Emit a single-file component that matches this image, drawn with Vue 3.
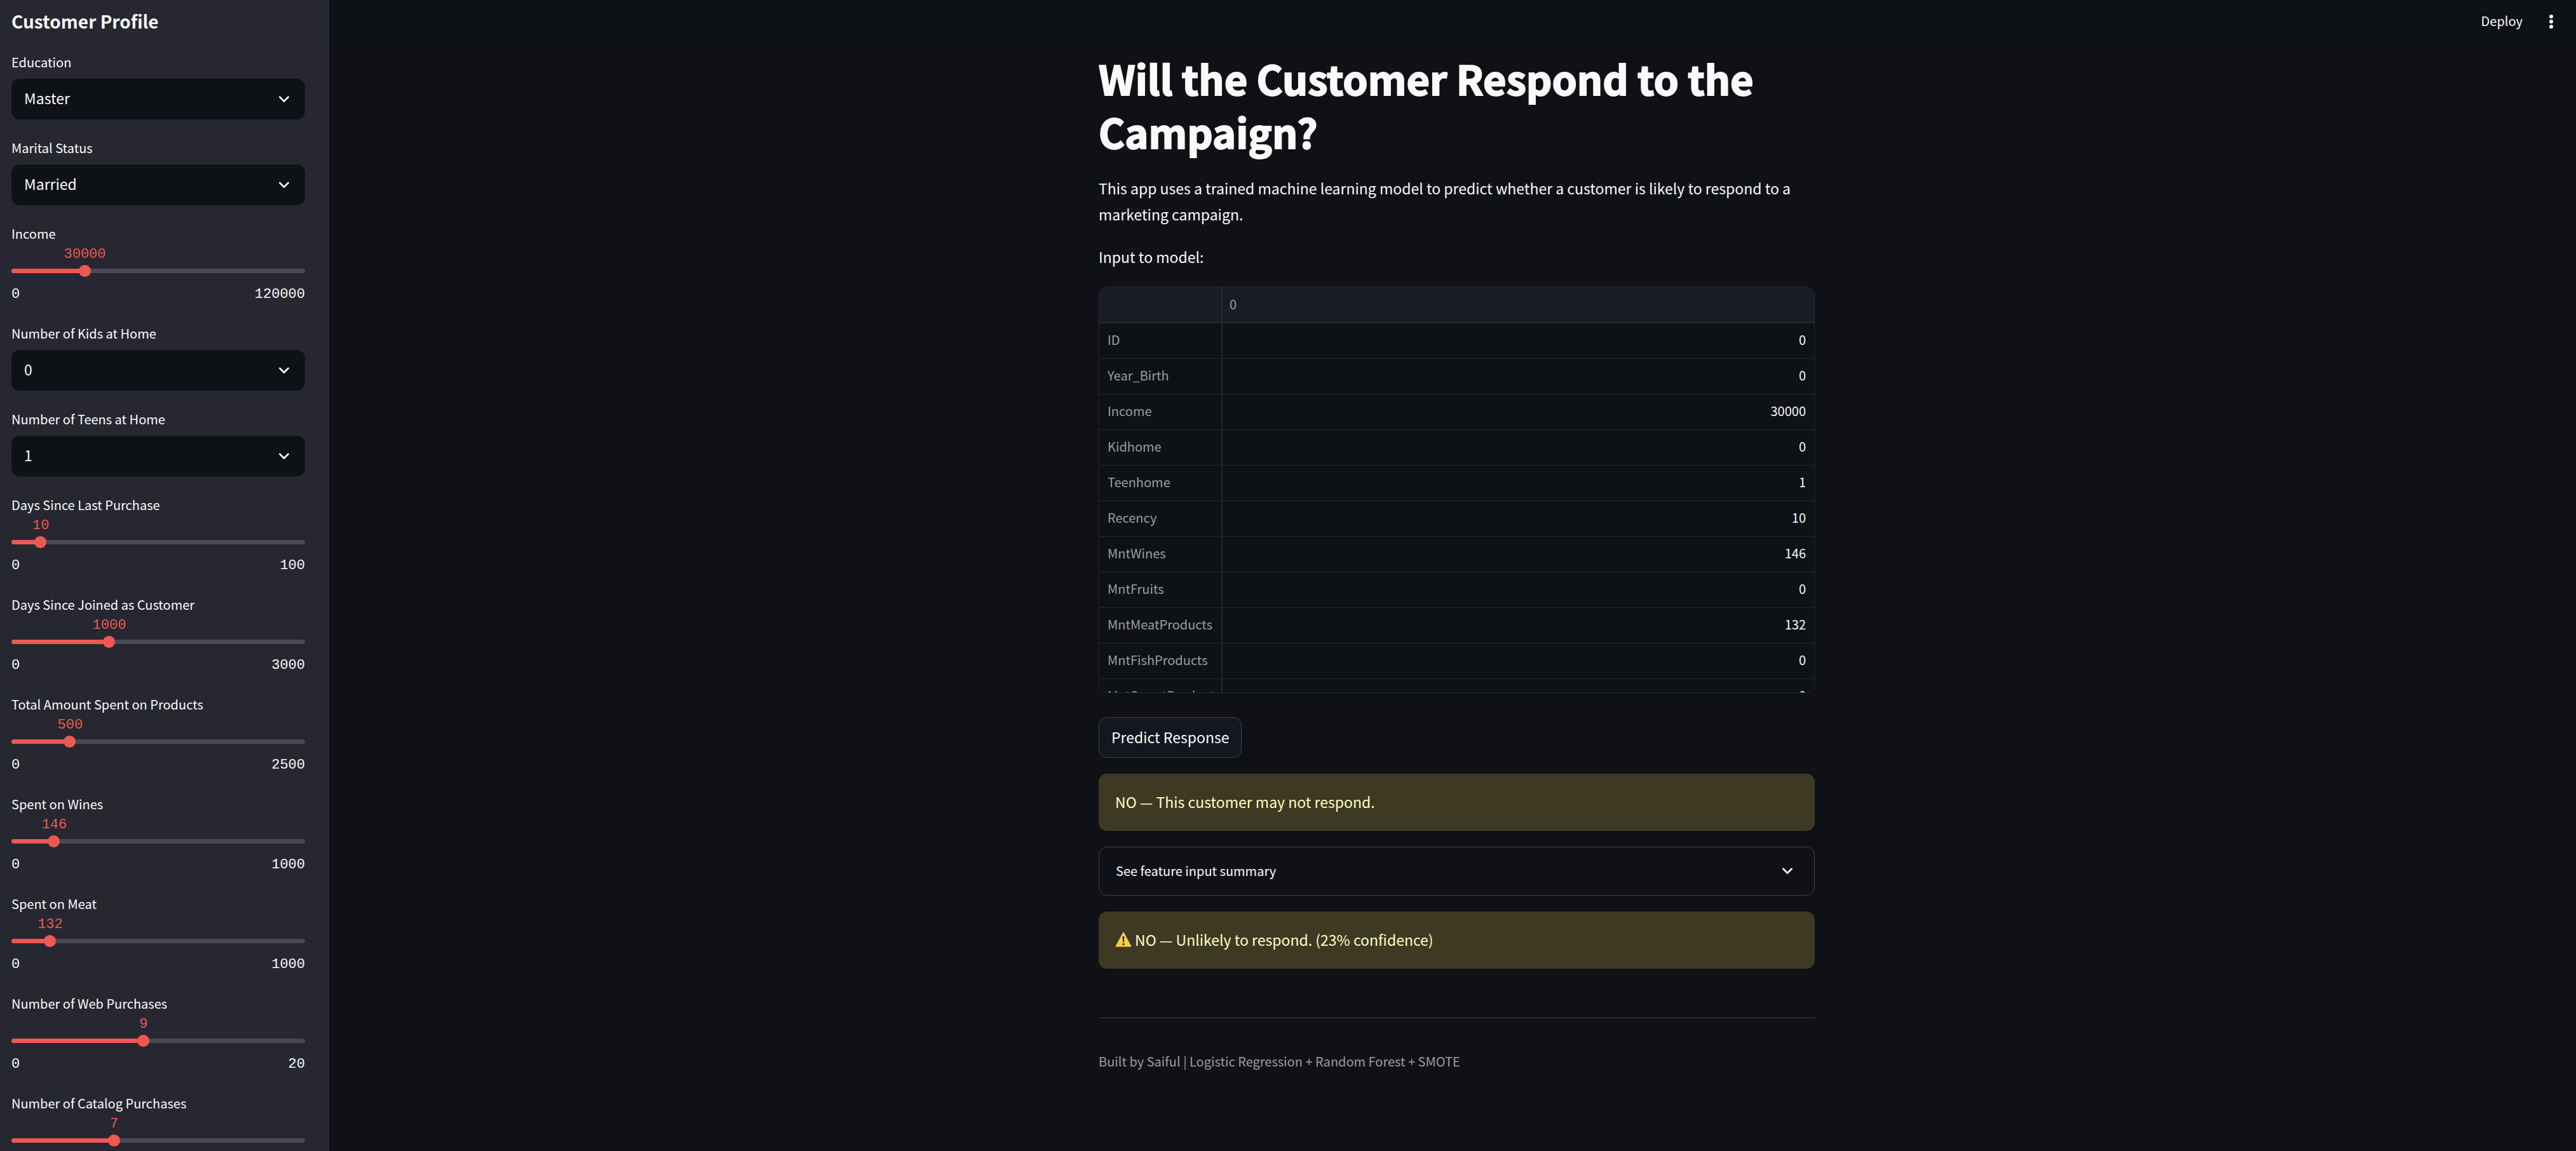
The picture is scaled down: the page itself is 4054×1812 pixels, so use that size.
<script setup>
import { reactive } from 'vue'

const fields = reactive([
  { id: 'education', kind: 'select', label: 'Education', value: 'Master', options: ['Basic', 'Graduation', 'Master', 'PhD'] },
  { id: 'marital', kind: 'select', label: 'Marital Status', value: 'Married', options: ['Single', 'Married', 'Divorced', 'Widow'] },
  { id: 'income', kind: 'range', label: 'Income', value: 30000, max: 120000 },
  { id: 'kids', kind: 'select', label: 'Number of Kids at Home', value: '0', options: ['0', '1', '2'] },
  { id: 'teens', kind: 'select', label: 'Number of Teens at Home', value: '1', options: ['0', '1', '2'] },
  { id: 'recency', kind: 'range', label: 'Days Since Last Purchase', value: 10, max: 100 },
  { id: 'joined', kind: 'range', label: 'Days Since Joined as Customer', value: 1000, max: 3000 },
  { id: 'total', kind: 'range', label: 'Total Amount Spent on Products', value: 500, max: 2500 },
  { id: 'wines', kind: 'range', label: 'Spent on Wines', value: 146, max: 1000 },
  { id: 'meat', kind: 'range', label: 'Spent on Meat', value: 132, max: 1000 },
  { id: 'web', kind: 'range', label: 'Number of Web Purchases', value: 9, max: 20 },
  { id: 'catalog', kind: 'range', label: 'Number of Catalog Purchases', value: 7, max: 20 }
])

const rows = [
  ['ID', 0],
  ['Year_Birth', 0],
  ['Income', 30000],
  ['Kidhome', 0],
  ['Teenhome', 1],
  ['Recency', 10],
  ['MntWines', 146],
  ['MntFruits', 0],
  ['MntMeatProducts', 132],
  ['MntFishProducts', 0],
  ['MntSweetProducts', 0]
]

const percent = (field) => `${(field.value / field.max) * 100}%`
</script>

<template>
  <div class="app">
    <aside class="sidebar">
      <h2>Customer Profile</h2>
      <template v-for="field in fields" :key="field.id">
        <div v-if="field.kind === 'select'" class="field">
          <label :for="field.id">{{ field.label }}</label>
          <div class="select">
            <select :id="field.id" v-model="field.value">
              <option v-for="option in field.options" :key="option">{{ option }}</option>
            </select>
            <svg class="chevron" viewBox="0 0 24 24" aria-hidden="true">
              <path d="M7 9.6 12 14.6 17 9.6" />
            </svg>
          </div>
        </div>
        <div v-else class="field">
          <label :for="field.id">{{ field.label }}</label>
          <div class="value">
            <output :for="field.id" :style="{ marginLeft: percent(field) }">{{ field.value }}</output>
          </div>
          <div class="slider">
            <div class="track"><div class="fill" :style="{ width: percent(field) }"></div></div>
            <input :id="field.id" v-model.number="field.value" type="range" min="0" :max="field.max" />
          </div>
          <div class="bounds"><span>0</span><span>{{ field.max }}</span></div>
        </div>
      </template>
    </aside>

    <div class="page">
      <header class="toolbar">
        <button type="button" class="deploy">Deploy</button>
        <button type="button" class="menu" aria-label="Main menu">
          <svg viewBox="0 0 32 32" aria-hidden="true">
            <circle cx="16" cy="8" r="3" />
            <circle cx="16" cy="16" r="3" />
            <circle cx="16" cy="24" r="3" />
          </svg>
        </button>
      </header>

      <main>
        <h1>Will the Customer Respond to the Campaign?</h1>
        <p>
          This app uses a trained machine learning model to predict whether a customer is likely to respond to a
          marketing campaign.
        </p>
        <p>Input to model:</p>

        <div class="grid">
          <table>
            <thead>
              <tr>
                <th class="index"></th>
                <th scope="col">0</th>
              </tr>
            </thead>
            <tbody>
              <tr v-for="[name, value] in rows" :key="name">
                <th class="index" scope="row">{{ name }}</th>
                <td>{{ value }}</td>
              </tr>
            </tbody>
          </table>
        </div>

        <button type="button" class="predict">Predict Response</button>

        <div class="alert" role="alert">NO — This customer may not respond.</div>

        <details>
          <summary>
            See feature input summary
            <svg class="chevron" viewBox="0 0 24 24" aria-hidden="true">
              <path d="M7 9.6 12 14.6 17 9.6" />
            </svg>
          </summary>
        </details>

        <div class="alert" role="alert">
          <svg class="warning" viewBox="0 0 26 24" role="img" aria-label="Warning">
            <defs>
              <linearGradient id="warning-fill" x1="0" y1="0" x2="0" y2="1">
                <stop offset="0" stop-color="#f8d877" />
                <stop offset="1" stop-color="#fac936" />
              </linearGradient>
            </defs>
            <path
              d="M13 1.2 24.8 22.8H1.2Z"
              fill="url(#warning-fill)"
              stroke="#f5cd55"
              stroke-width="1.4"
              stroke-linejoin="round"
            />
            <path d="M11.6 8.2a1.4 1.4 0 0 1 2.8 0l-.5 7.6a.9.9 0 0 1-1.8 0Z" fill="#2b2617" />
            <circle cx="13" cy="19.4" r="1.5" fill="#2b2617" />
          </svg>
          NO — Unlikely to respond. (23% confidence)
        </div>

        <hr />
        <footer>Built by Saiful | Logistic Regression + Random Forest + SMOTE</footer>
      </main>
    </div>
  </div>
</template>

<style>
body {
  margin: 0;
  background: #101116;
}
</style>

<style scoped>
* {
  box-sizing: border-box;
}

.app {
  display: flex;
  height: 100vh;
  overflow: hidden;
  color: #fafafa;
  background: #101116;
  font: 400 23px/41px "Noto Sans CJK SC", "Noto Sans", sans-serif;
}

button,
select {
  font: inherit;
  color: inherit;
}

h1,
h2,
p {
  margin: 0;
}

.sidebar {
  flex: 0 0 518px;
  display: flex;
  flex-direction: column;
  gap: 25px;
  padding: 14px 38px 0 18px;
  overflow: hidden;
  background: #262730;
}

h2 {
  flex: none;
  padding-bottom: 1px;
  font-size: 28px;
  line-height: 38px;
  font-weight: 700;
}

.field {
  flex: none;
}

label {
  display: block;
  padding-top: 1px;
  font-size: 20px;
  line-height: 38px;
}

.select {
  display: grid;
  align-items: center;
  margin-top: 7px;
}

.select > * {
  grid-area: 1 / 1;
}

select {
  appearance: none;
  width: 100%;
  height: 64px;
  padding: 0 60px 3px 20px;
  border: 0;
  border-radius: 13px;
  background: #0e1116;
}

.chevron {
  width: 32px;
  height: 32px;
  fill: none;
  stroke: #fafafa;
  stroke-width: 2;
  stroke-linecap: round;
  pointer-events: none;
}

.select .chevron {
  justify-self: end;
  margin-right: 17px;
}

.value,
.bounds {
  font: 22px/24px "Liberation Mono", monospace;
}

.value {
  margin-top: 2px;
  color: #ec5953;
}

output {
  display: flex;
  justify-content: center;
  width: 0;
}

.slider {
  display: grid;
  align-items: center;
  height: 19px;
  margin: 4px 0 16px;
}

.slider > * {
  grid-area: 1 / 1;
}

.track {
  height: 7px;
  border-radius: 4px;
  background: #494a54;
}

.fill {
  height: 100%;
  border-radius: 4px 0 0 4px;
  background: #ec5953;
}

input {
  appearance: none;
  width: calc(100% + 19px);
  height: 19px;
  margin: 0 -9px 0 -10px;
  background: transparent;
}

input::-webkit-slider-thumb {
  appearance: none;
  width: 19px;
  height: 19px;
  border-radius: 50%;
  background: #ec5953;
}

.bounds {
  display: flex;
  justify-content: space-between;
  margin-bottom: 4px;
}

.page {
  flex: 1;
  min-width: 0;
}

.toolbar {
  display: flex;
  justify-content: flex-end;
  align-items: center;
  gap: 29px;
  height: 68px;
  padding-right: 23px;
  background: #0e1116;
}

.deploy,
.menu {
  padding: 0;
  border: 0;
  background: none;
}

.deploy {
  padding-bottom: 3px;
  font-size: 20px;
}

.menu,
.menu svg {
  display: block;
  width: 32px;
  height: 32px;
  fill: #fafafa;
}

main {
  display: flex;
  flex-direction: column;
  gap: 25px;
  max-width: 1140px;
  margin: 0 auto;
  padding: 13px 0 0 13px;
}

h1 {
  padding-bottom: 2px;
  font-size: 63px;
  line-height: 84px;
  font-weight: 700;
  -webkit-text-stroke: 2px;
}

p {
  padding-bottom: 1px;
}

.grid {
  height: 640px;
  margin-bottom: 13px;
  overflow: hidden;
  border: 1px solid #26282c;
  border-radius: 13px;
  background: #0e1116;
}

table {
  width: 100%;
  table-layout: fixed;
  border-collapse: separate;
  border-spacing: 0;
  font-size: 20px;
  line-height: 32px;
}

th,
td {
  height: 56px;
  padding: 0 13px 4px;
  border-bottom: 1px solid #26282c;
  font-weight: 400;
  white-space: nowrap;
}

th {
  color: #9c9d9f;
  text-align: left;
}

td {
  text-align: right;
}

.index {
  width: 194px;
  border-right: 2px solid #26282c;
}

thead th {
  height: 57px;
  padding: 0 11px 2px;
  border-bottom-width: 2px;
  background: #1a1c24;
}

.predict {
  align-self: flex-start;
  height: 64px;
  padding: 0 19px 2px;
  border: 1px solid #41444c;
  border-radius: 13px;
  background: #131720;
}

.alert {
  display: flex;
  align-items: center;
  gap: 5px;
  height: 90px;
  padding: 0 26px 2px;
  border-radius: 13px;
  color: #ffffc2;
  background: #3e3923;
}

.warning {
  width: 26px;
  height: 24px;
}

details {
  border: 1px solid #3e4045;
  border-radius: 13px;
}

summary {
  display: flex;
  justify-content: space-between;
  align-items: center;
  height: 75px;
  padding: 0 26px 2px;
  font-size: 20px;
  list-style: none;
}

hr {
  width: 100%;
  height: 1px;
  margin: 52px 0 26px;
  border: 0;
  background: #3e4045;
}

footer {
  color: #9c9d9f;
  font-size: 20px;
  line-height: 33px;
}
</style>
